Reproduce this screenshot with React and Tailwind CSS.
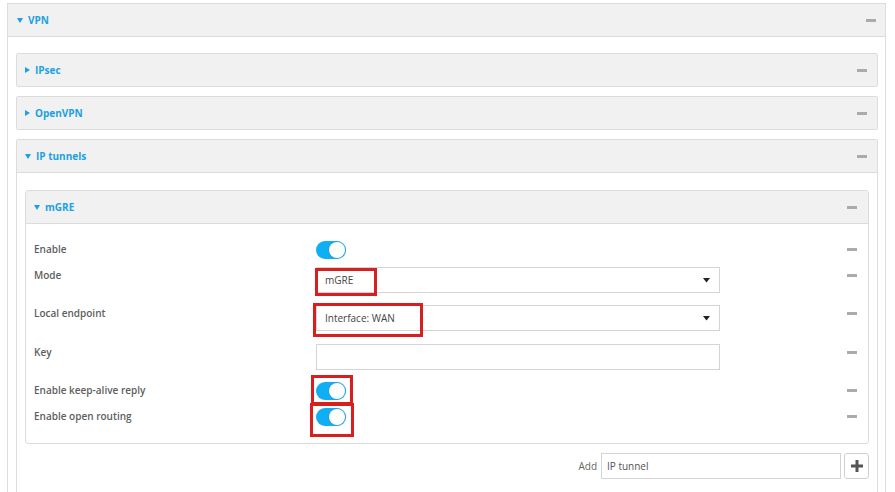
const font = { fontFamily: '"Open Sans", "Noto Sans", Arial, sans-serif' }

function Minus() {
  return <div className="w-[10px] h-[3px] bg-[#ababab]" />
}

function Caret({ open }) {
  return open ? (
    <svg width="6" height="5" viewBox="0 0 6 5" className="mr-[5px]">
      <path d="M0 0 L6 0 L3 5 Z" fill="#1ba1e2" />
    </svg>
  ) : (
    <svg width="5" height="6" viewBox="0 0 5 6" className="mr-[5px]">
      <path d="M0 0 L5 3 L0 6 Z" fill="#1ba1e2" />
    </svg>
  )
}

function PanelHeader({ title, open, pl = 'pl-[9px]', pr = 'pr-[11px]' }) {
  return (
    <div className={`h-[33px] flex items-center bg-[#f1f1f1] border-b border-[#dcdcdc] ${pl} ${pr}`}>
      <Caret open={open} />
      <span className="text-[10px] font-bold text-[#1ba1e2]">{title}</span>
      <div className="ml-auto"><Minus /></div>
    </div>
  )
}

function Collapsed({ title }) {
  return (
    <div className="border border-[#dcdcdc] rounded-[2px] mb-[9px] overflow-hidden">
      <div className="h-[32px] flex items-center bg-[#f1f1f1] pl-[8px] pr-[10px]">
        <Caret open={false} />
        <span className="text-[10px] font-bold text-[#1ba1e2]">{title}</span>
        <div className="ml-auto"><Minus /></div>
      </div>
    </div>
  )
}

function Toggle() {
  return (
    <div className="w-[30px] h-[18px] rounded-full bg-[#10aef2] relative">
      <div className="absolute right-[1px] top-[1px] w-[16px] h-[16px] rounded-full bg-white shadow-[0_0_1px_1px_rgba(60,140,200,0.45)]" />
    </div>
  )
}

function Select({ value }) {
  return (
    <div className="w-[404px] h-[26px] border border-[#d4d4d4] bg-white flex items-center pl-[8px] pr-[9px]">
      <span className="text-[10px] text-[#444]">{value}</span>
      <svg width="7" height="5" viewBox="0 0 7 5" className="ml-auto">
        <path d="M0 0 L7 0 L3.5 4.5 Z" fill="#222" />
      </svg>
    </div>
  )
}

function Row({ label, children, mt }) {
  return (
    <div className={`flex items-start ${mt}`}>
      <div className="w-[282px] text-[10px] font-semibold text-[#5e5e5e] leading-[16px]">{label}</div>
      <div className="relative">{children}</div>
      <div className="ml-auto pt-[7px]"><Minus /></div>
    </div>
  )
}

function RedBox({ cls }) {
  return <div className={`absolute border-[3px] border-[#d81f1f] ${cls}`} />
}

export default function App() {
  return (
    <div className="w-[895px] h-[492px] overflow-hidden bg-white" style={font}>
      <div className="ml-[7px] mt-[3px] w-[879px] border border-[#dcdcdc]">
        <PanelHeader title="VPN" open pl="pl-[9px]" pr="pr-[9px]" />
        <div className="pl-[8px] pr-[7px] pt-[16px] pb-[40px]">
          <Collapsed title="IPsec" />
          <Collapsed title="OpenVPN" />
          <div className="border border-[#dcdcdc] rounded-[2px]">
            <PanelHeader title="IP tunnels" open pl="pl-[8px]" pr="pr-[10px]" />
            <div className="px-[8px] pt-[17px] pb-[30px]">
              <div className="border border-[#dcdcdc] rounded-[3px] overflow-hidden">
                <PanelHeader title="mGRE" open pl="pl-[8px]" pr="pr-[11px]" />
                <div className="pl-[8px] pr-[11px] pt-[17px] pb-[17px]">
                  <Row label="Enable" mt="">
                    <Toggle />
                  </Row>
                  <Row label="Mode" mt="mt-[8px]">
                    <Select value="mGRE" />
                    <RedBox cls="-left-[1px] top-[1px] w-[62px] h-[28px]" />
                  </Row>
                  <Row label="Local endpoint" mt="mt-[12px]">
                    <Select value="Interface: WAN" />
                    <RedBox cls="-left-[3px] -top-[2px] w-[110px] h-[34px]" />
                  </Row>
                  <Row label="Key" mt="mt-[13px]">
                    <div className="w-[404px] h-[26px] border border-[#d4d4d4] bg-white" />
                  </Row>
                  <Row label="Enable keep-alive reply" mt="mt-[12px]">
                    <Toggle />
                    <RedBox cls="-left-[5px] -top-[7px] w-[42px] h-[30px]" />
                  </Row>
                  <Row label="Enable open routing" mt="mt-[8px]">
                    <Toggle />
                    <RedBox cls="-left-[6px] -top-[5px] w-[44px] h-[34px]" />
                  </Row>
                </div>
              </div>
              <div className="flex items-center justify-end mt-[9px]">
                <span className="text-[10px] text-[#666] mr-[4px]">Add</span>
                <div className="w-[240px] h-[26px] border border-[#d4d4d4] flex items-center pl-[5px]">
                  <span className="text-[10px] text-[#555]">IP tunnel</span>
                </div>
                <div className="ml-[3px] w-[25px] h-[26px] border border-[#cfcfcf] rounded-[3px] flex items-center justify-center bg-white">
                  <svg width="12" height="12" viewBox="0 0 12 12">
                    <path d="M4.5 0 H7.5 V4.5 H12 V7.5 H7.5 V12 H4.5 V7.5 H0 V4.5 H4.5 Z" fill="#555" />
                  </svg>
                </div>
              </div>
            </div>
          </div>
        </div>
      </div>
    </div>
  )
}
